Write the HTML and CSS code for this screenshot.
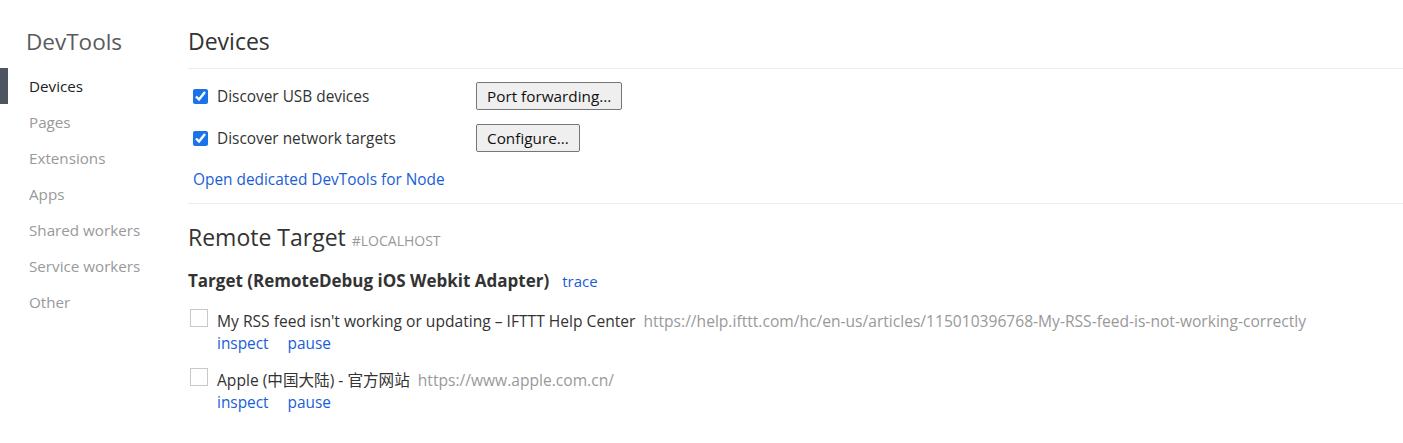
FILE: index.html
```html
<!DOCTYPE html>
<html>
<head>
<meta charset="utf-8">
<link rel="stylesheet" href="styles.css">
</head>
<body>
<div class="page">
  <nav class="sidebar">
    <div class="brand">DevTools</div>
    <ul class="nav">
      <li class="nav-item selected">Devices</li>
      <li class="nav-item">Pages</li>
      <li class="nav-item">Extensions</li>
      <li class="nav-item">Apps</li>
      <li class="nav-item">Shared workers</li>
      <li class="nav-item">Service workers</li>
      <li class="nav-item">Other</li>
    </ul>
  </nav>
  <main class="content">
    <header class="page-header">Devices</header>
    <section class="device-settings">
      <div class="setting-row">
        <label class="setting-label"><input type="checkbox" checked><span>Discover USB devices</span></label>
        <button class="btn">Port forwarding...</button>
      </div>
      <div class="setting-row">
        <label class="setting-label"><input type="checkbox" checked><span>Discover network targets</span></label>
        <button class="btn">Configure...</button>
      </div>
      <a class="link node-link">Open dedicated DevTools for Node</a>
    </section>
    <section class="remote">
      <h2 class="remote-title">Remote Target <span class="remote-host">#LOCALHOST</span></h2>
      <div class="target-heading"><span class="target-name">Target (RemoteDebug iOS Webkit Adapter)</span><a class="link trace">trace</a></div>
      <div class="target-item">
        <span class="box"></span>
        <div class="target-body">
          <div class="target-line"><span class="target-title">My RSS feed isn't working or updating – IFTTT Help Center</span><span class="target-url">https://help.ifttt.com/hc/en-us/articles/115010396768-My-RSS-feed-is-not-working-correctly</span></div>
          <div class="actions"><a class="link">inspect</a><a class="link">pause</a></div>
        </div>
      </div>
      <div class="target-item">
        <span class="box"></span>
        <div class="target-body">
          <div class="target-line"><span class="target-title">Apple (中国大陆) - 官方网站</span><span class="target-url">https://www.apple.com.cn/</span></div>
          <div class="actions"><a class="link">inspect</a><a class="link">pause</a></div>
        </div>
      </div>
    </section>
  </main>
</div>
</body>
</html>
```
FILE: styles.css
```css
* { box-sizing: border-box; }
html, body { margin: 0; padding: 0; background: #fff; }
body {
  font-family: "Open Sans", "Noto Sans", "Noto Sans CJK SC", sans-serif;
  color: #333;
  font-size: 15.4px;
}
.page { display: flex; width: 1403px; height: 443px; overflow: hidden; }
.sidebar { width: 188px; flex: none; }
.brand {
  height: 68px;
  padding: 14px 0 0 26px;
  display: flex;
  align-items: center;
  font-size: 22.5px;
  color: #5a5a5a;
}
.nav { list-style: none; margin: 0; padding: 0; }
.nav-item {
  height: 36px;
  line-height: 37px;
  font-size: 15.2px;
  color: #999;
  border-left: 8px solid transparent;
  padding-left: 21px;
}
.nav-item.selected { color: #222; border-left-color: #4e5561; }
.content { flex: 1; min-width: 0; }
.page-header {
  height: 69px;
  padding-top: 14px;
  display: flex;
  align-items: center;
  font-size: 23px;
  color: #333;
  border-bottom: 1px solid #eee;
}
.device-settings {
  display: flex;
  flex-direction: column;
  align-items: flex-start;
  gap: 14px;
  padding: 13px 0 0 5px;
  border-bottom: 1px solid #eee;
  height: 135px;
}
.setting-row { display: flex; align-items: center; height: 28px; }
.setting-label { width: 283px; display: flex; align-items: center; font-size: 15.4px; }
.setting-label input {
  width: 15px; height: 15px; margin: 0 9px 0 0;
  accent-color: #1a73e8;
}
.btn {
  height: 28px;
  padding: 0 10px;
  font-family: inherit;
  font-size: 15.3px;
  color: #111;
  background: #efefef;
  border: 1px solid #767676;
  border-radius: 2px;
}
.link { color: #1a5ed6; text-decoration: none; cursor: pointer; }
.node-link { display: block; font-size: 15.4px; line-height: 20px; margin-top: 4px; }
.remote-title {
  margin: 0;
  padding-top: 17px;
  font-weight: normal;
  font-size: 23px;
  line-height: 32px;
}
.remote-host { font-size: 14px; color: #999; }
.target-heading { margin-top: 13px; line-height: 22px; display: flex; align-items: baseline; }
.target-name { font-weight: bold; font-size: 17px; }
.trace { font-size: 15px; margin-left: 13px; }
.target-item { display: flex; margin-top: 18px; padding-left: 2px; }
.target-item + .target-item { margin-top: 14px; }
.box {
  width: 18px; height: 18px; flex: none;
  border: 1px solid #c8c8c8;
  margin: -1px 9px 0 0;
}
.target-line { line-height: 22px; font-size: 15.6px; }
.target-url { color: #999; margin-left: 8px; }
.actions { line-height: 23px; font-size: 15.4px; }
.actions .link { margin-right: 19px; }
```
